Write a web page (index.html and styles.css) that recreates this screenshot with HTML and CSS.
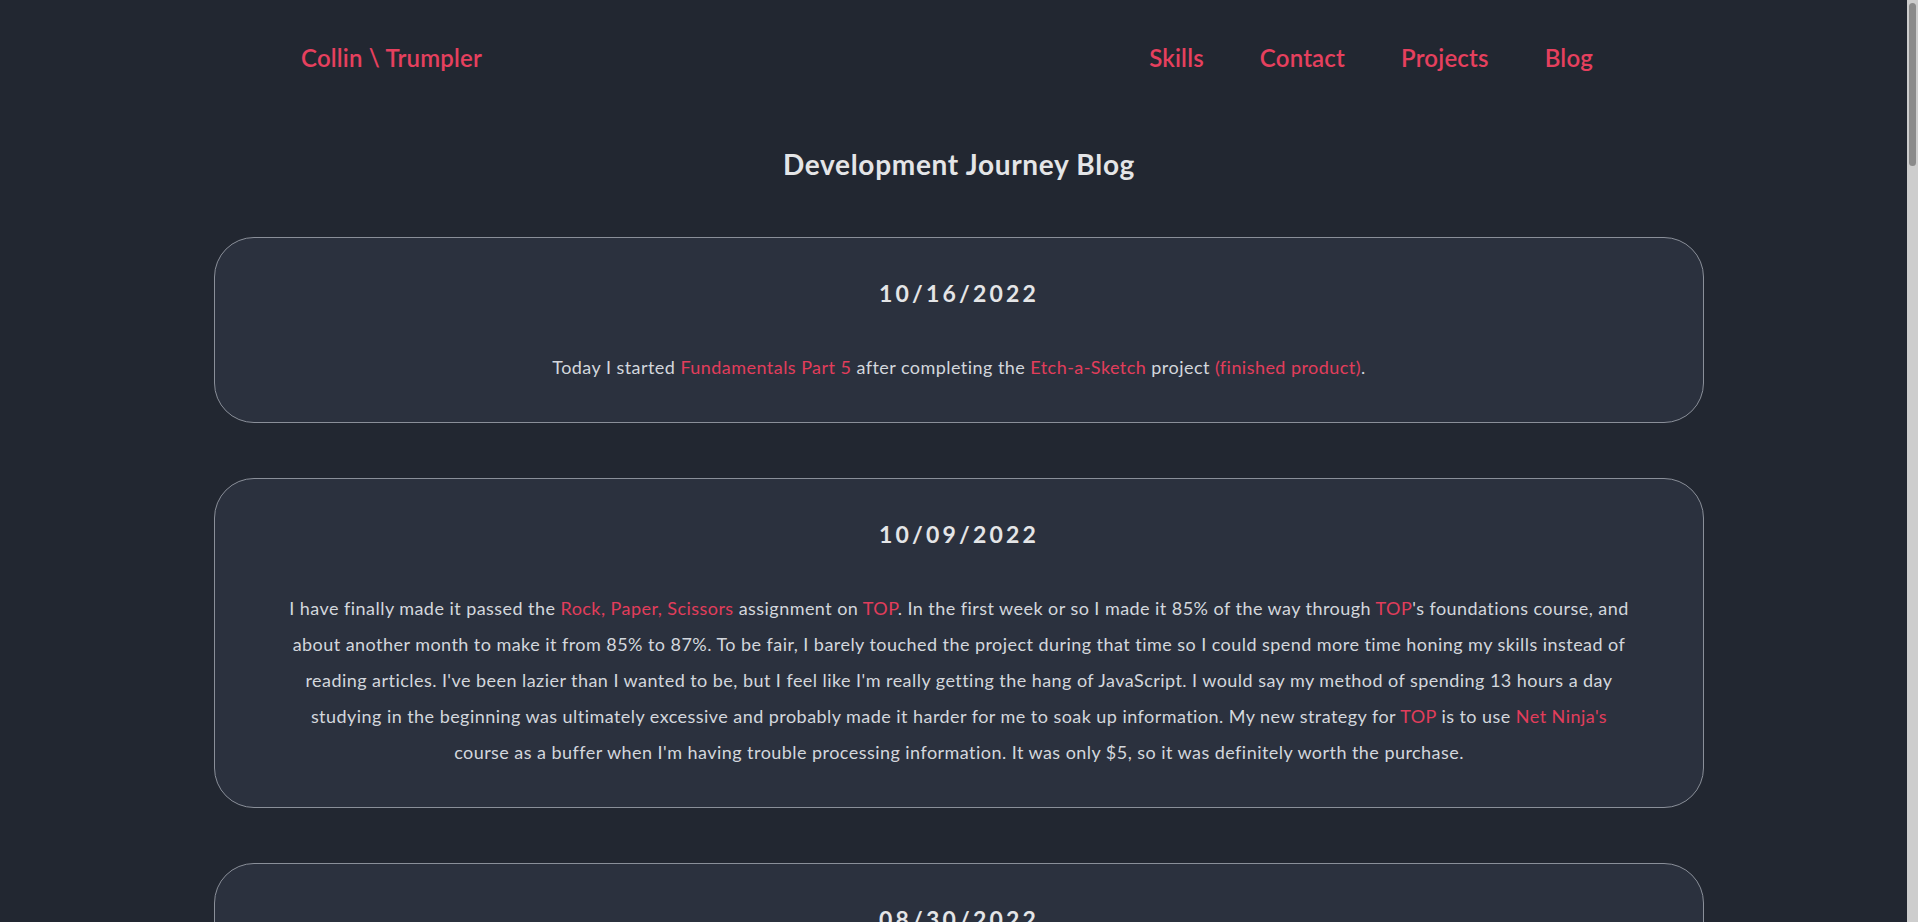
FILE: index.html
```html
<!DOCTYPE html>
<html lang="en">
<head>
<meta charset="utf-8">
<title>Development Journey Blog</title>
<link rel="stylesheet" href="styles.css">
</head>
<body>
<div class="page">
  <header class="header">
    <a class="logo" href="#">Collin \ Trumpler</a>
    <nav class="nav">
      <a href="#">Skills</a>
      <a href="#">Contact</a>
      <a href="#">Projects</a>
      <a href="#">Blog</a>
    </nav>
  </header>
  <main class="main">
    <h1 class="title">Development Journey Blog</h1>
    <article class="post">
      <h2 class="date">10/16/2022</h2>
      <p class="text">Today I started <a href="#">Fundamentals Part 5</a> after completing the <a href="#">Etch-a-Sketch</a> project <a href="#">(finished product)</a>.</p>
    </article>
    <article class="post">
      <h2 class="date">10/09/2022</h2>
      <p class="text">I have finally made it passed the <a href="#">Rock, Paper, Scissors</a> assignment on <a href="#">TOP</a>. In the first week or so I made it 85% of the way through <a href="#">TOP</a>'s foundations course, and about another month to make it from 85% to 87%. To be fair, I barely touched the project during that time so I could spend more time honing my skills instead of reading articles. I've been lazier than I wanted to be, but I feel like I'm really getting the hang of JavaScript. I would say my method of spending 13 hours a day studying in the beginning was ultimately excessive and probably made it harder for me to soak up information. My new strategy for <a href="#">TOP</a> is to use <a href="#">Net Ninja's</a> course as a buffer when I'm having trouble processing information. It was only $5, so it was definitely worth the purchase.</p>
    </article>
    <article class="post">
      <h2 class="date">08/30/2022</h2>
      <p class="text">Today I finished the <a href="#">Landing Page</a> project on <a href="#">TOP</a>. It took me longer than I expected, mostly because I kept going back to tweak the layout with flexbox until everything lined up the way I wanted it to. I learned a lot about how margins, padding and borders work together, and I feel much more comfortable building a page from scratch now.</p>
    </article>
    <article class="post">
      <h2 class="date">08/21/2022</h2>
      <p class="text">I started working through the <a href="#">Flexbox</a> lessons today. The interactive exercises helped a lot, and I spent some extra time playing <a href="#">Flexbox Froggy</a> to make the concepts stick.</p>
    </article>
    <article class="post">
      <h2 class="date">08/12/2022</h2>
      <p class="text">I completed the <a href="#">Recipes</a> project today. It is a simple website made with plain HTML, but it was a great way to practice linking pages together and organizing files in a project folder. I also set up a repository on <a href="#">GitHub</a> and pushed my first commits.</p>
    </article>
    <article class="post">
      <h2 class="date">08/05/2022</h2>
      <p class="text">I set up my development environment today: a code editor, the command line and <a href="#">Git</a>. It took a while to get everything working, but it feels good to finally have a proper setup.</p>
    </article>
    <article class="post">
      <h2 class="date">07/29/2022</h2>
      <p class="text">Today I decided to start learning web development with <a href="#">The Odin Project</a>. I plan on keeping this blog as a record of my progress, what I learn along the way, and the projects I build.</p>
    </article>
    <article class="post">
      <h2 class="date">07/25/2022</h2>
      <p class="text">I spent the week researching different ways to learn programming. After reading a lot of reviews and forum posts, I settled on a free, project based curriculum so I can learn by building real things.</p>
    </article>
    <article class="post">
      <h2 class="date">07/18/2022</h2>
      <p class="text">This is the very first entry in my development journey. I don't know much yet, but I'm excited to see how far I can get.</p>
    </article>
    <article class="post">
      <h2 class="date">07/11/2022</h2>
      <p class="text">I wrote my first lines of HTML today and opened the file in my browser. It was a small step, but seeing something I made show up on the screen was a great feeling.</p>
    </article>
    <article class="post">
      <h2 class="date">07/04/2022</h2>
      <p class="text">I made a plan to study for a few hours every day and to write about what I learn here at the end of each week.</p>
    </article>
  </main>
</div>
<div class="scrollbar" aria-hidden="true"><div class="scrollbar-thumb"></div></div>
</body>
</html>
```
FILE: styles.css
```css
html {
  overflow-x: hidden;
  background: #222731;
}

body {
  margin: 0;
  background: #222731;
  font-family: Lato, "Open Sans", sans-serif;
  color: #d3d7dd;
}

a {
  text-decoration: none;
  color: #e23d5b;
}

.page {
  width: 100vw;
}

.header {
  display: flex;
  justify-content: space-between;
  align-items: center;
  height: 114px;
  padding: 0 325px 0 301px;
  box-sizing: border-box;
}

.logo,
.nav a {
  color: #e6405e;
  font-size: 24px;
  font-weight: 600;
  letter-spacing: 0.2px;
}

.nav {
  display: flex;
  gap: 56px;
}

.main {
  display: flex;
  flex-direction: column;
  align-items: center;
  padding-bottom: 60px;
}

.title {
  margin: 32px 0 55px;
  font-size: 28px;
  line-height: 36px;
  font-weight: 700;
  letter-spacing: 0.7px;
  color: #e4e5e7;
}

.post {
  width: 1490px;
  box-sizing: border-box;
  margin-bottom: 55px;
  padding: 40px 70px 37px;
  background: #2b313e;
  border: 1px solid #8a8f99;
  border-radius: 40px;
  text-align: center;
}

.date {
  margin: 0 0 41px;
  font-size: 23px;
  line-height: 30px;
  font-weight: 700;
  letter-spacing: 3.2px;
  color: #e4e5e7;
}

.text {
  margin: 0;
  font-size: 18px;
  line-height: 36px;
  letter-spacing: 0.45px;
}

.scrollbar {
  position: fixed;
  top: 0;
  right: 0;
  width: 11px;
  height: 100vh;
  background: #cdcdcd;
}

.scrollbar-thumb {
  margin: 3px 2px 0 2px;
  height: 163px;
  border-radius: 4px;
  background: #8a8a8a;
}
```
